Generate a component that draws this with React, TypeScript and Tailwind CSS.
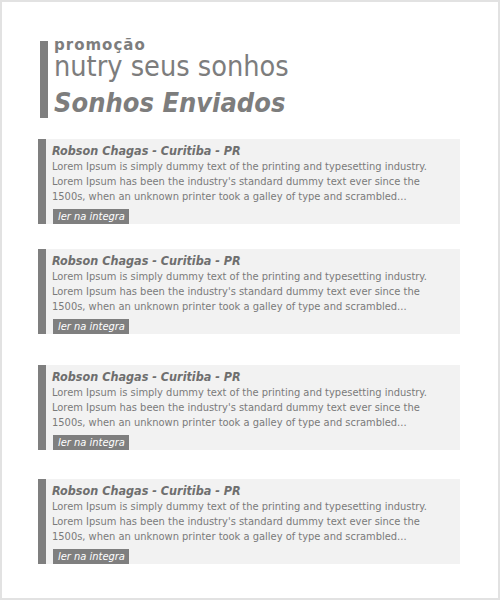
import React from "react";

const cond = { fontFamily: '"DejaVu Sans Condensed", "DejaVu Sans", sans-serif' } as const;
const wide = { fontFamily: '"DejaVu Sans", sans-serif' } as const;

function Card({ mt }: { mt: string }) {
  return (
    <div className={`${mt} flex w-[422px] h-[85px] bg-[#f2f2f2]`}>
      <div className="w-[8px] shrink-0 bg-[#7f7f7f]" />
      <div className="flex flex-col pl-[6px] pt-[4px]">
        <div className="text-[12.5px] leading-[16px] font-bold italic text-[#6e6e6e] whitespace-nowrap">
          Robson Chagas - Curitiba - PR
        </div>
        <div className="text-[11px] leading-[15px] text-[#7a7a7a] whitespace-nowrap">
          <div>Lorem Ipsum is simply dummy text of the printing and typesetting industry.</div>
          <div>Lorem Ipsum has been the industry's standard dummy text ever since the</div>
          <div>1500s, when an unknown printer took a galley of type and scrambled...</div>
        </div>
        <div className="mt-[5px] ml-[1px] w-[76px] h-[15px] bg-[#7f7f7f] pl-[5px] text-[11px] leading-[15px] italic text-white whitespace-nowrap">
          ler na integra
        </div>
      </div>
    </div>
  );
}

export default function App() {
  return (
    <div
      className="w-[500px] h-[600px] border-2 border-[#e2e2e2] bg-white pl-[36px] pt-[39px]"
      style={cond}
    >
      <div className="flex items-start h-[77px] ml-[2px]">
        <div className="w-[8px] h-[77px] bg-[#7f7f7f] shrink-0" />
        <div className="ml-[6px] -mt-[5px] flex flex-col text-[#7d7d7d] whitespace-nowrap">
          <div className="text-[15px] leading-[18px] font-bold tracking-[1px]" style={wide}>
            promoção
          </div>
          <div className="text-[28.6px] leading-[24px]">nutry seus sonhos</div>
          <div className="mt-[9px] text-[27px] leading-[32px] font-bold italic">Sonhos Enviados</div>
        </div>
      </div>
      <Card mt="mt-[21px]" />
      <Card mt="mt-[25px]" />
      <Card mt="mt-[31px]" />
      <Card mt="mt-[29px]" />
    </div>
  );
}
